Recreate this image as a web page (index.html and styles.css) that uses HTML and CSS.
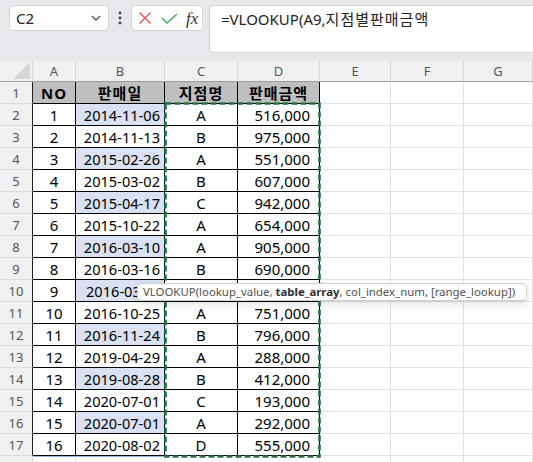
FILE: index.html
```html
<!DOCTYPE html>
<html lang="ko">
<head>
<meta charset="utf-8">
<link rel="stylesheet" href="styles.css">
</head>
<body>
<div class="app">
  <div class="toolbar">
    <div class="namebox">
      <span class="ref">C2</span>
      <svg class="chev" width="10" height="6" viewBox="0 0 10 6"><polyline points="1,1 5,5 9,1" fill="none" stroke="#555" stroke-width="1.3"/></svg>
    </div>
    <div class="dots">
      <svg width="4" height="14" viewBox="0 0 4 14"><circle cx="2" cy="2" r="1.4" fill="#444"/><circle cx="2" cy="7" r="1.4" fill="#444"/><circle cx="2" cy="12" r="1.4" fill="#444"/></svg>
    </div>
    <div class="fnbox">
      <svg width="14" height="14" viewBox="0 0 14 14"><path d="M1.5 1.5 L12.5 12.5 M12.5 1.5 L1.5 12.5" stroke="#e45a5a" stroke-width="1.5" fill="none"/></svg>
      <svg width="17" height="11" viewBox="0 0 17 11"><polyline points="1,5 6,10 16,1" fill="none" stroke="#4aad5f" stroke-width="1.5"/></svg>
      <span class="fx">fx</span>
    </div>
    <div class="formula">=VLOOKUP(A9,<span class="ko">지점별판매금액</span></div>
  </div>

  <div class="sheet">
    <div class="corner"><svg width="17" height="17" viewBox="0 0 17 17"><polygon points="17,0 17,17 0,17" fill="#d6d6d6"/></svg></div>
    <div class="ch">A</div><div class="ch">B</div><div class="ch">C</div><div class="ch">D</div><div class="ch">E</div><div class="ch">F</div><div class="ch">G</div>

    <div class="rh">1</div><div class="c t th">NO</div><div class="c t th">판매일</div><div class="c t th">지점명</div><div class="c t th">판매금액</div><div class="c"></div><div class="c"></div><div class="c"></div>
    <div class="rh">2</div><div class="c t ctr">1</div><div class="c t num hl">2014-11-06</div><div class="c t ctr">A</div><div class="c t amt">516,000</div><div class="c"></div><div class="c"></div><div class="c"></div>
    <div class="rh">3</div><div class="c t ctr">2</div><div class="c t num">2014-11-13</div><div class="c t ctr">B</div><div class="c t amt">975,000</div><div class="c"></div><div class="c"></div><div class="c"></div>
    <div class="rh">4</div><div class="c t ctr">3</div><div class="c t num hl">2015-02-26</div><div class="c t ctr">A</div><div class="c t amt">551,000</div><div class="c"></div><div class="c"></div><div class="c"></div>
    <div class="rh">5</div><div class="c t ctr">4</div><div class="c t num">2015-03-02</div><div class="c t ctr">B</div><div class="c t amt">607,000</div><div class="c"></div><div class="c"></div><div class="c"></div>
    <div class="rh">6</div><div class="c t ctr">5</div><div class="c t num hl">2015-04-17</div><div class="c t ctr">C</div><div class="c t amt">942,000</div><div class="c"></div><div class="c"></div><div class="c"></div>
    <div class="rh">7</div><div class="c t ctr">6</div><div class="c t num">2015-10-22</div><div class="c t ctr">A</div><div class="c t amt">654,000</div><div class="c"></div><div class="c"></div><div class="c"></div>
    <div class="rh">8</div><div class="c t ctr">7</div><div class="c t num hl">2016-03-10</div><div class="c t ctr">A</div><div class="c t amt">905,000</div><div class="c"></div><div class="c"></div><div class="c"></div>
    <div class="rh">9</div><div class="c t ctr">8</div><div class="c t num">2016-03-16</div><div class="c t ctr">B</div><div class="c t amt">690,000</div><div class="c"></div><div class="c"></div><div class="c"></div>
    <div class="rh">10</div><div class="c t ctr">9</div><div class="c t part hl">2016-03</div><div class="c t ctr"></div><div class="c t amt"></div><div class="c"></div><div class="c"></div><div class="c"></div>
    <div class="rh">11</div><div class="c t ctr">10</div><div class="c t num">2016-10-25</div><div class="c t ctr">A</div><div class="c t amt">751,000</div><div class="c"></div><div class="c"></div><div class="c"></div>
    <div class="rh">12</div><div class="c t ctr">11</div><div class="c t num hl">2016-11-24</div><div class="c t ctr">B</div><div class="c t amt">796,000</div><div class="c"></div><div class="c"></div><div class="c"></div>
    <div class="rh">13</div><div class="c t ctr">12</div><div class="c t num">2019-04-29</div><div class="c t ctr">A</div><div class="c t amt">288,000</div><div class="c"></div><div class="c"></div><div class="c"></div>
    <div class="rh">14</div><div class="c t ctr">13</div><div class="c t num hl">2019-08-28</div><div class="c t ctr">B</div><div class="c t amt">412,000</div><div class="c"></div><div class="c"></div><div class="c"></div>
    <div class="rh">15</div><div class="c t ctr">14</div><div class="c t num">2020-07-01</div><div class="c t ctr">C</div><div class="c t amt">193,000</div><div class="c"></div><div class="c"></div><div class="c"></div>
    <div class="rh">16</div><div class="c t ctr">15</div><div class="c t num hl">2020-07-01</div><div class="c t ctr">A</div><div class="c t amt">292,000</div><div class="c"></div><div class="c"></div><div class="c"></div>
    <div class="rh">17</div><div class="c t ctr">16</div><div class="c t num">2020-08-02</div><div class="c t ctr">D</div><div class="c t amt">555,000</div><div class="c"></div><div class="c"></div><div class="c"></div>
    <div class="rh last"></div><div class="c edge"></div><div class="c edge"></div><div class="c"></div><div class="c"></div><div class="c"></div><div class="c"></div><div class="c"></div>

    <svg class="ants" width="157" height="356" viewBox="0 0 157 356"><rect x="1.5" y="1.5" width="154" height="353" fill="none" stroke="#217346" stroke-width="2.6" stroke-dasharray="6 3"/></svg>
    <div class="tip">VLOOKUP(lookup_value, <b>table_array</b>, col_index_num, [range_lookup])</div>
  </div>
</div>
</body>
</html>
```
FILE: styles.css
```css
* { box-sizing: border-box; }
html, body { margin: 0; padding: 0; }
body {
  width: 533px;
  height: 462px;
  overflow: hidden;
  background: #e8e8ec;
  font-family: "Noto Sans", "Noto Sans CJK KR", sans-serif;
  color: #000;
}
.app { width: 533px; height: 462px; overflow: hidden; }

.toolbar {
  height: 61px;
  display: flex;
  align-items: flex-start;
  padding: 5px 0 0 9px;
}
.namebox {
  width: 100px;
  height: 26px;
  background: #fff;
  border: 1px solid #d6d6d9;
  border-radius: 4px;
  display: flex;
  align-items: center;
  justify-content: space-between;
  padding: 0 7px 0 6px;
}
.ref { font-size: 15px; color: #222; }
.dots {
  width: 22px;
  height: 26px;
  display: flex;
  align-items: center;
  justify-content: center;
}
.fnbox {
  width: 72px;
  height: 26px;
  background: #fff;
  border: 1px solid #d6d6d9;
  border-radius: 4px;
  display: flex;
  align-items: center;
  gap: 9px;
  padding: 0 0 0 6px;
}
.fx {
  font-family: "Liberation Serif", serif;
  font-style: italic;
  font-size: 17px;
  color: #333;
  line-height: 1;
  margin-left: -1px;
}
.formula {
  flex: 1;
  margin-left: 6px;
  margin-right: -10px;
  height: 48px;
  background: #fff;
  border: 1px solid #d6d6d9;
  border-radius: 4px;
  padding: 2px 0 0 11px;
  font-size: 15px;
  color: #222;
  line-height: 22px;
}
.ko { letter-spacing: 1px; }

.sheet {
  position: relative;
  display: grid;
  grid-template-columns: 33px 43px 89px 73px 82px 71px 73px 69px;
  grid-template-rows: 21px repeat(18, 22px);
  background: #fff;
}
.corner {
  background: #f0f0f0;
  border-right: 1px solid #d4d4d4;
  border-bottom: 1px solid #a6a6a6;
  display: flex;
  align-items: flex-end;
  justify-content: flex-end;
  padding: 0 2px 2px 0;
}
.ch {
  background: #f0f0f0;
  border-right: 1px solid #d4d4d4;
  border-bottom: 1px solid #9c9c9c;
  font-size: 13px;
  color: #555;
  display: flex;
  align-items: center;
  justify-content: center;
}
.rh {
  background: #f0f0f0;
  border-right: 1px solid #222;
  border-bottom: 1px solid #dcdcdc;
  font-size: 13px;
  color: #555;
  display: flex;
  align-items: center;
  justify-content: center;
}
.rh.last { border-right-color: #d4d4d4; }
.c {
  border-right: 1px solid #e1e1e1;
  border-bottom: 1px solid #e1e1e1;
  font-size: 15px;
  display: flex;
  align-items: center;
  white-space: nowrap;
  overflow: hidden;
}
.c.t { border-right-color: #000; border-bottom-color: #000; }
.th { background: #bfbfbf; font-weight: bold; justify-content: center; letter-spacing: 1px; }
.ctr { justify-content: center; }
.num { justify-content: flex-end; padding-right: 4px; font-size: 14.6px; }
.part { padding-left: 10px; font-size: 14.6px; }
.amt { justify-content: flex-end; padding-right: 9px; }
.hl { background: #d9e1f2; }
.edge { border-top: 1px solid #9fb6e0; }

.ants {
  position: absolute;
  left: 164px;
  top: 41px;
  z-index: 2;
  display: block;
}
.tip {
  position: absolute;
  left: 137px;
  top: 222px;
  width: 390px;
  height: 18px;
  z-index: 3;
  background: #fff;
  border: 1px solid #d2d2d2;
  border-radius: 5px;
  box-shadow: 0 3px 8px rgba(0,0,0,0.12);
  font-size: 11.4px;
  color: #505050;
  line-height: 16px;
  padding-left: 5px;
  white-space: nowrap;
}
.tip b { color: #303030; font-weight: bold; }
```
